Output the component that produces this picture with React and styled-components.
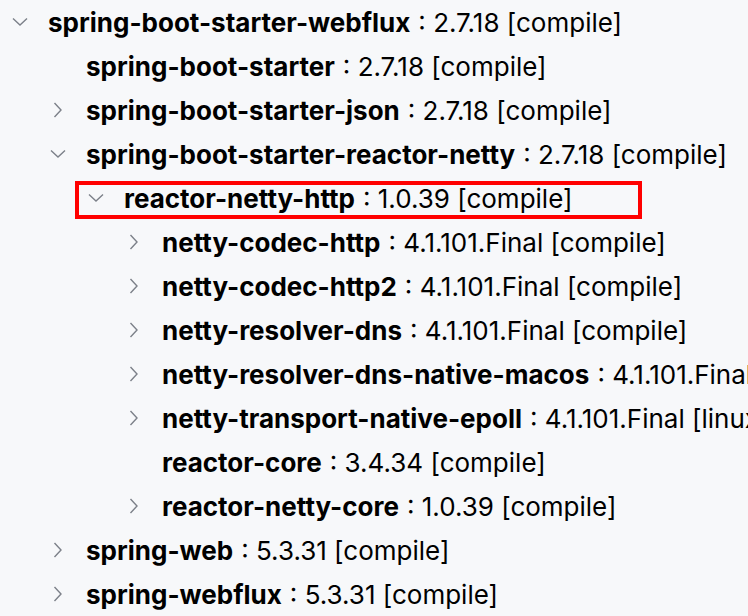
import React from "react"
import styled, { createGlobalStyle } from "styled-components"

const GlobalStyle = createGlobalStyle`
  html, body {
    margin: 0;
    padding: 0;
    background: #f7f8fa;
  }
  body {
    font-family: Inter, "Noto Sans", sans-serif;
  }
`

const rows = [
  { level: 0, state: "open", name: "spring-boot-starter-webflux", meta: "2.7.18 [compile]" },
  { level: 1, state: "leaf", name: "spring-boot-starter", meta: "2.7.18 [compile]" },
  { level: 1, state: "closed", name: "spring-boot-starter-json", meta: "2.7.18 [compile]" },
  { level: 1, state: "open", name: "spring-boot-starter-reactor-netty", meta: "2.7.18 [compile]" },
  { level: 2, state: "open", name: "reactor-netty-http", meta: "1.0.39 [compile]", marked: true },
  { level: 3, state: "closed", name: "netty-codec-http", meta: "4.1.101.Final [compile]" },
  { level: 3, state: "closed", name: "netty-codec-http2", meta: "4.1.101.Final [compile]" },
  { level: 3, state: "closed", name: "netty-resolver-dns", meta: "4.1.101.Final [compile]" },
  { level: 3, state: "closed", name: "netty-resolver-dns-native-macos", meta: "4.1.101.Final [compile]" },
  { level: 3, state: "closed", name: "netty-transport-native-epoll", meta: "4.1.101.Final [linux-x86_64] [compile]" },
  { level: 3, state: "leaf", name: "reactor-core", meta: "3.4.34 [compile]" },
  { level: 3, state: "closed", name: "reactor-netty-core", meta: "1.0.39 [compile]" },
  { level: 1, state: "closed", name: "spring-web", meta: "5.3.31 [compile]" },
  { level: 1, state: "closed", name: "spring-webflux", meta: "5.3.31 [compile]" },
]

const Tree = styled.div`
  width: 748px;
  height: 616px;
  overflow: hidden;
  background: #f7f8fa;
`

const Row = styled.div`
  position: relative;
  height: 44px;
  display: flex;
  align-items: center;
  padding-left: ${props => 12 + props.level * 38}px;
  white-space: nowrap;
  font-size: 26px;
  color: #000;

  ${props =>
    props.marked &&
    `
    &::after {
      content: "";
      position: absolute;
      left: 75px;
      top: 5px;
      width: 559px;
      height: 30px;
      border: 4px solid #ff0000;
      pointer-events: none;
    }
  `}
`

const Toggle = styled.span`
  width: 16px;
  height: 16px;
  flex: none;
  margin-right: 20px;
  display: flex;
  align-items: center;
  justify-content: center;
`

const Name = styled.span`
  font-weight: 700;
`

const Meta = styled.span`
  font-weight: 400;
  margin-left: 8px;
`

function Chevron({ state }) {
  if (state === "leaf") return <Toggle />
  return (
    <Toggle>
      <svg width="16" height="16" viewBox="0 0 16 16" fill="none">
        {state === "open" ? (
          <path d="M1 4.5l7 6.5 7-6.5" stroke="#7c8089" strokeWidth="1.4" />
        ) : (
          <path d="M4.5 1l6.5 7-6.5 7" stroke="#7c8089" strokeWidth="1.4" />
        )}
      </svg>
    </Toggle>
  )
}

export default function App() {
  return (
    <>
      <GlobalStyle />
      <Tree>
        {rows.map(row => (
          <Row key={row.name} level={row.level} marked={row.marked}>
            <Chevron state={row.state} />
            <Name>{row.name}</Name>
            <Meta>: {row.meta}</Meta>
          </Row>
        ))}
      </Tree>
    </>
  )
}
